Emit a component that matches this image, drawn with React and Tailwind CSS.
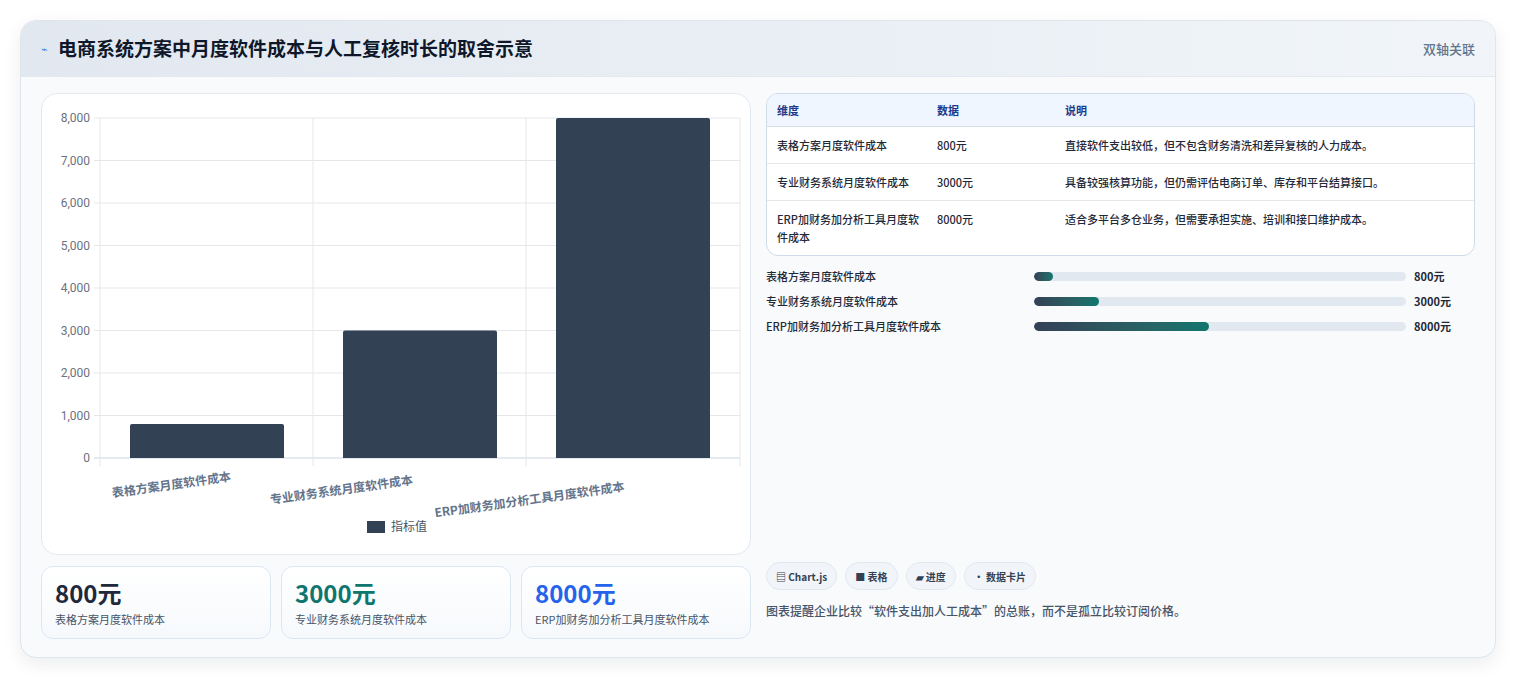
import React from "react";

const F = { fontFamily: '"Noto Sans CJK SC","Noto Sans",sans-serif' };

function Chart() {
  const x0 = 58, x1 = 698, yTop = 24, yBot = 364;
  const sy = (v) => yBot - (v / 8000) * (yBot - yTop);
  const ticks = [0, 1000, 2000, 3000, 4000, 5000, 6000, 7000, 8000];
  const bars = [
    { l: 88, v: 800, t: "表格方案月度软件成本", lx: 130, ly: 395 },
    { l: 301, v: 3000, t: "专业财务系统月度软件成本", lx: 300, ly: 400 },
    { l: 514, v: 8000, t: "ERP加财务加分析工具月度软件成本", lx: 488, ly: 410 },
  ];
  return (
    <svg width="710" height="462" style={F}>
      {ticks.map((t) => (
        <g key={t}>
          <line x1={x0 - 6} x2={x1} y1={sy(t)} y2={sy(t)} stroke={t === 0 ? "#cbd5e1" : "#e5e7eb"} />
          <text x={x0 - 10} y={sy(t) + 4} textAnchor="end" fontSize="12" fill="#6b7280" fontFamily="Roboto,sans-serif">
            {t.toLocaleString("en-US")}
          </text>
        </g>
      ))}
      {[58, 271, 484, 698].map((x) => (
        <line key={x} x1={x} x2={x} y1={yTop} y2={yBot + 8} stroke="#e5e7eb" />
      ))}
      {bars.map((b) => (
        <g key={b.t}>
          <path d={`M${b.l} ${yBot} V${sy(b.v) + 2} Q${b.l} ${sy(b.v)} ${b.l + 2} ${sy(b.v)} H${b.l + 152} Q${b.l + 154} ${sy(b.v)} ${b.l + 154} ${sy(b.v) + 2} V${yBot} Z`} fill="#334155" />
          <text x={b.lx} y={b.ly} textAnchor="middle" fontSize="12" fontWeight="600" fill="#64748b" transform={`rotate(-8 ${b.lx} ${b.ly})`}>
            {b.t}
          </text>
        </g>
      ))}
      <rect x="325" y="427" width="18" height="12" fill="#334155" />
      <text x="349" y="437" fontSize="12" fill="#4b5563">指标值</text>
    </svg>
  );
}

export default function App() {
  const rows = [
    ["表格方案月度软件成本", "800元", "直接软件支出较低，但不包含财务清洗和差异复核的人力成本。"],
    ["专业财务系统月度软件成本", "3000元", "具备较强核算功能，但仍需评估电商订单、库存和平台结算接口。"],
    ["ERP加财务加分析工具月度软件成本", "8000元", "适合多平台多仓业务，但需要承担实施、培训和接口维护成本。"],
  ];
  const prog = [
    ["表格方案月度软件成本", "800元", 5],
    ["专业财务系统月度软件成本", "3000元", 17.5],
    ["ERP加财务加分析工具月度软件成本", "8000元", 47],
  ];
  return (
    <div className="w-[1516px] h-[678px] bg-white pt-5 px-5" style={F}>
      <div className="h-[638px] rounded-2xl border border-[#dfe5ee] bg-[#f8fafc] shadow-[0_6px_18px_rgba(15,23,42,0.08)] overflow-hidden">
        <div className="h-[56px] flex items-center justify-between px-5 bg-gradient-to-r from-[#e2e8f0] to-[#f1f5f9] border-b border-[#e2e8f0]">
          <div className="flex items-center gap-2.5">
            <span className="text-[#3b82f6] text-[11px]">⌁</span>
            <span className="text-[19px] font-bold text-[#0f172a]">电商系统方案中月度软件成本与人工复核时长的取舍示意</span>
          </div>
          <span className="text-[13px] text-[#64748b] font-medium">双轴关联</span>
        </div>
        <div className="flex gap-[15px] px-5 pt-4">
          <div className="w-[710px] flex flex-col gap-[11px]">
            <div className="h-[462px] rounded-2xl border border-[#e2e8f0] bg-white"><Chart /></div>
            <div className="grid grid-cols-3 gap-[10px]">
              {[["800元", "text-[#1e293b]", "表格方案月度软件成本"], ["3000元", "text-[#0f766e]", "专业财务系统月度软件成本"], ["8000元", "text-[#2563eb]", "ERP加财务加分析工具月度软件成本"]].map(([v, c, l]) => (
                <div key={v} className="h-[73px] rounded-xl border border-[#dbe7f3] bg-gradient-to-b from-white to-[#f6f9fc] px-[13px] pt-[10px]">
                  <div className={`text-[24px] font-bold leading-[32px] ${c}`}>{v}</div>
                  <div className="text-[11px] text-[#475569] mt-[2px]">{l}</div>
                </div>
              ))}
            </div>
          </div>
          <div className="flex-1 flex flex-col">
            <div className="rounded-xl border border-[#cfdbe8] bg-white overflow-hidden text-[11px]">
              <div className="flex h-[33px] items-center bg-[#eff6ff] border-b border-[#d6e0ea] font-bold text-[#1e3a8a]">
                <div className="w-[170px] pl-[10px]">维度</div><div className="w-[128px]">数据</div><div>说明</div>
              </div>
              {rows.map((r, i) => (
                <div key={i} className={`flex py-[9px] text-[#1f2937] font-medium leading-[18px] ${i < 2 ? "border-b border-[#e5e7eb]" : ""}`}>
                  <div className="w-[170px] pl-[10px] pr-3">{r[0]}</div><div className="w-[128px]">{r[1]}</div><div>{r[2]}</div>
                </div>
              ))}
            </div>
            <div className="mt-[11px] flex flex-col gap-[7px] text-[11px] font-medium text-[#1f2937]">
              {prog.map(([l, v, p]) => (
                <div key={l} className="flex items-center h-[18px]">
                  <div className="w-[268px]">{l}</div>
                  <div className="w-[372px] h-[9px] rounded-full bg-[#e2e8f0] overflow-hidden">
                    <div className="h-full rounded-full bg-gradient-to-r from-[#334155] to-[#0f766e]" style={{ width: p + "%" }} />
                  </div>
                  <div className="ml-2 font-bold">{v}</div>
                </div>
              ))}
            </div>
            <div className="mt-auto mb-[19px]">
              <div className="flex gap-2 text-[10px] font-bold text-[#334155]">
                {["▤ Chart.js", "■ 表格", "▰ 进度", "• 数据卡片"].map((c) => (
                  <span key={c} className="h-[28px] px-[9px] flex items-center rounded-full border border-[#e2e8f0] bg-[#f1f5f9]">{c}</span>
                ))}
              </div>
              <div className="mt-[12px] text-[12px] text-[#475569] font-medium">图表提醒企业比较“软件支出加人工成本”的总账，而不是孤立比较订阅价格。</div>
            </div>
          </div>
        </div>
      </div>
    </div>
  );
}
